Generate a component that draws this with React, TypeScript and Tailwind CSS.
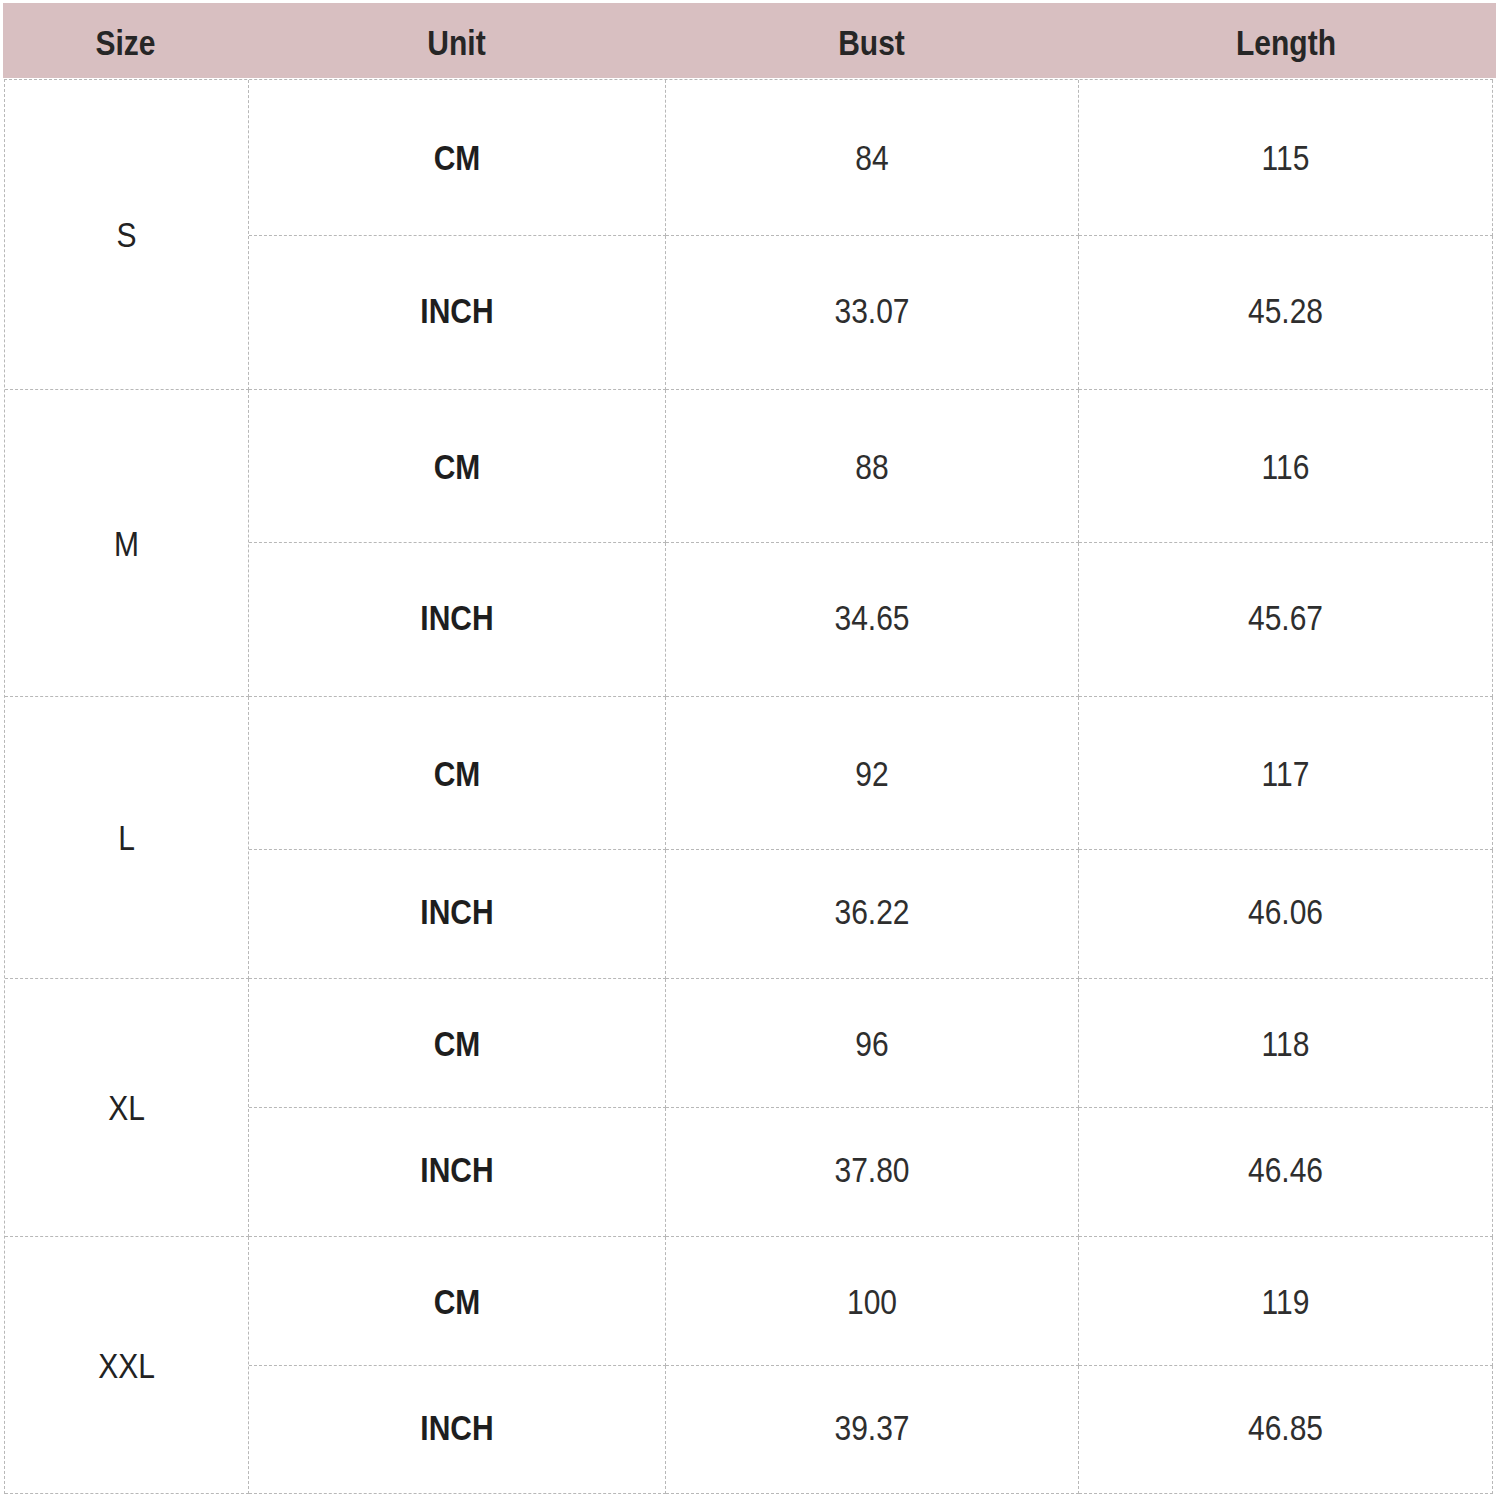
const rows = [
  { size: "S", cm: ["84", "115"], inch: ["33.07", "45.28"], h: ["h-[156px]", "h-[154px]"] },
  { size: "M", cm: ["88", "116"], inch: ["34.65", "45.67"], h: ["h-[153px]", "h-[154px]"] },
  { size: "L", cm: ["92", "117"], inch: ["36.22", "46.06"], h: ["h-[153px]", "h-[129px]"] },
  { size: "XL", cm: ["96", "118"], inch: ["37.80", "46.46"], h: ["h-[129px]", "h-[129px]"] },
  { size: "XXL", cm: ["100", "119"], inch: ["39.37", "46.85"], h: ["h-[129px]", "h-[128px]"] },
];

const cell = "flex items-center justify-center border-r border-b border-dashed border-[#b8b8b8]";

function T({ children }: { children: React.ReactNode }) {
  return <span className="inline-block scale-y-[1.17]">{children}</span>;
}

export default function App() {
  return (
    <div
      className="w-[1500px] h-[1498px] bg-white pt-[3px] text-[30px] text-[#2e2e2e]"
      style={{ fontFamily: '"Liberation Sans", Arial, sans-serif' }}
    >
      <div className="ml-[3px] w-[1493px] h-[75px] pt-[4px] bg-[#d8bfc1] flex font-bold text-[#262626]">
        <div className="w-[245px] flex items-center justify-center"><T>Size</T></div>
        <div className="w-[417px] flex items-center justify-center"><T>Unit</T></div>
        <div className="w-[413px] flex items-center justify-center"><T>Bust</T></div>
        <div className="w-[416px] flex items-center justify-center"><T>Length</T></div>
      </div>
      <div className="mt-[1px] ml-[4px] w-[1489px] border-l border-t border-dashed border-[#b8b8b8]">
        {rows.map((r) => (
          <div key={r.size} className="flex">
            <div className={`${cell} w-[244px] text-[#222]`}><T>{r.size}</T></div>
            <div className="flex flex-col">
              <div className={`flex ${r.h[0]}`}>
                <div className={`${cell} w-[417px] font-bold text-[#1e1e1e]`}><T>CM</T></div>
                <div className={`${cell} w-[413px]`}><T>{r.cm[0]}</T></div>
                <div className={`${cell} w-[414px]`}><T>{r.cm[1]}</T></div>
              </div>
              <div className={`flex ${r.h[1]}`}>
                <div className={`${cell} pb-[5px] w-[417px] font-bold text-[#1e1e1e]`}><T>INCH</T></div>
                <div className={`${cell} pb-[5px] w-[413px]`}><T>{r.inch[0]}</T></div>
                <div className={`${cell} pb-[5px] w-[414px]`}><T>{r.inch[1]}</T></div>
              </div>
            </div>
          </div>
        ))}
      </div>
    </div>
  );
}
